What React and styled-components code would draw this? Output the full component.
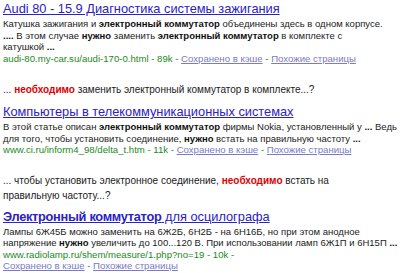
import styled, { createGlobalStyle } from "styled-components";

const GlobalStyle = createGlobalStyle`
    body {
        margin: 0;
        background: #ffffff;
        font-family: 'Liberation Sans', Arial, sans-serif;
    }
`;

const Page = styled.div`
    display: flex;
    flex-flow: column;
    padding: 1px 3px 0;
    width: 400px;
    box-sizing: border-box;
    overflow: hidden;
`;

const Result = styled.div`
    display: flex;
    flex-flow: column;
    margin-top: ${props => props.$top || 0}px;
`;

const Title = styled.a`
    display: block;
    font-size: 12.8px;
    line-height: 16px;
    color: #2a22c8;
    text-decoration: underline;
    white-space: nowrap;
    cursor: pointer;
    b { font-weight: bold; letter-spacing: -0.3px; }
`;

const Snippet = styled.div`
    margin-top: 1px;
    font-size: 9.5px;
    line-height: 11.5px;
    color: #222222;
    white-space: nowrap;
    b { font-weight: bold; color: #111; }
`;

const Line = styled.div``;

const Meta = styled.div`
    font-size: 9.6px;
    line-height: 11.5px;
    color: #1c8a1c;
    white-space: nowrap;
`;

const Sep = styled.span`
    color: #1c8a1c;
`;

const CacheLink = styled.a`
    color: #7a7ac8;
    text-decoration: underline;
    cursor: pointer;
`;

const Quote = styled.div`
    margin-top: ${props => props.$top}px;
    font-size: 10px;
    line-height: 15px;
    color: #1a1a1a;
    white-space: nowrap;
    b { color: #dd0000; font-weight: bold; }
`;

function Links() {
    return (
        <>
            <CacheLink>Сохранено в кэше</CacheLink>
            <Sep> - </Sep>
            <CacheLink>Похожие страницы</CacheLink>
        </>
    );
}

export default function App() {
    return (
        <Page>
            <GlobalStyle />
            <Result>
                <Title>Audi 80 - 15.9 Диагностика системы зажигания</Title>
                <Snippet>
                    <Line>Катушка зажигания и <b>электронный коммутатор</b> объединены здесь в одном корпусе.</Line>
                    <Line><b>....</b> В этом случае <b>нужно</b> заменить <b>электронный коммутатор</b> в комплекте с</Line>
                    <Line>катушкой <b>...</b></Line>
                </Snippet>
                <Meta>audi-80.my-car.su/audi-170-0.html - 89k - <Links /></Meta>
            </Result>

            <Quote $top={17.5}>... <b>необходимо</b> заменить электронный коммутатор в комплекте...?</Quote>

            <Result $top={7.5}>
                <Title>Компьютеры в телекоммуникационных системах</Title>
                <Snippet>
                    <Line>В этой статье описан <b>электронный коммутатор</b> фирмы Nokia, установленный у <b>...</b> Ведь</Line>
                    <Line>для того, чтобы установить соединение, <b>нужно</b> встать на правильную частоту <b>...</b></Line>
                </Snippet>
                <Meta>www.ci.ru/inform4_98/delta_t.htm - 11k - <Links /></Meta>
            </Result>

            <Quote $top={17.75}>
                ... чтобы установить электронное соединение, <b>необходимо</b> встать на
                <br />
                правильную частоту...?
            </Quote>

            <Result $top={5.5}>
                <Title><b>Электронный коммутатор</b> для осцилографа</Title>
                <Snippet>
                    <Line>Лампы 6Ж45Б можно заменить на 6Ж2Б, 6Н2Б - на 6Н16Б, но при этом анодное</Line>
                    <Line>напряжение <b>нужно</b> увеличить до 100...120 В. При использовании ламп 6Ж1П и 6Н15П <b>...</b></Line>
                </Snippet>
                <Meta>www.radiolamp.ru/shem/measure/1.php?no=19 - 10k -</Meta>
                <Meta><Links /></Meta>
            </Result>
        </Page>
    );
}
